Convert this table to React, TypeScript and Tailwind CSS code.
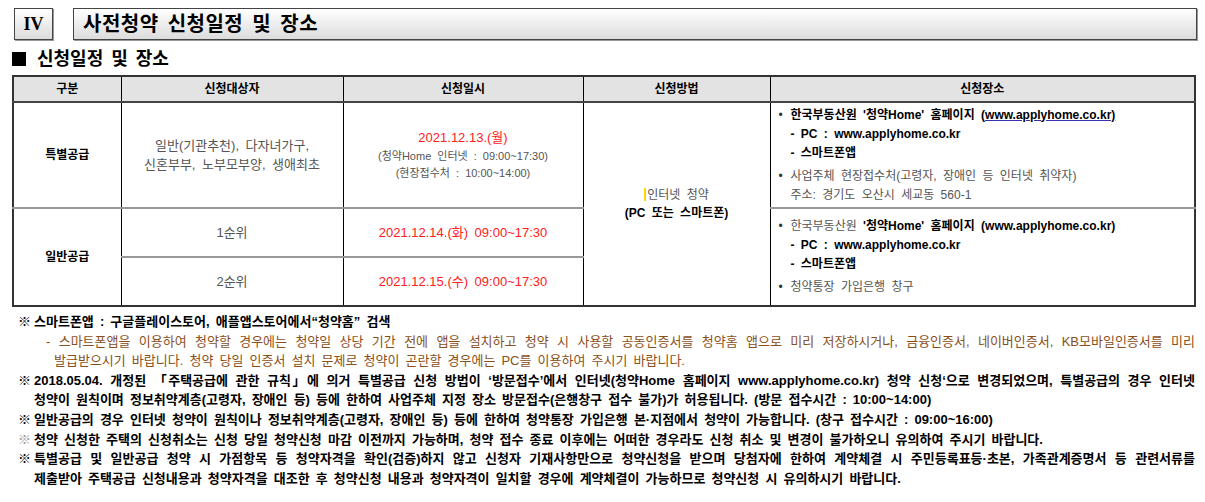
import React from 'react';

const KR = "font-['Liberation_Sans','Noto_Sans_CJK_KR',sans-serif]";

const notes: { lines: string[]; lightMark?: boolean }[] = [
  {
    lines: [
      '2018.05.04. 개정된 「주택공급에 관한 규칙」에 의거 특별공급 신청 방법이 ‘방문접수’에서 인터넷(청약Home 홈페이지 www.applyhome.co.kr) 청약 신청‘으로 변경되었으며, 특별공급의 경우 인터넷',
      '청약이 원칙이며 정보취약계층(고령자, 장애인 등) 등에 한하여 사업주체 지정 장소 방문접수(은행창구 접수 불가)가 허용됩니다. (방문 접수시간 : 10:00~14:00)',
    ],
  },
  {
    lines: [
      '일반공급의 경우 인터넷 청약이 원칙이나 정보취약계층(고령자, 장애인 등) 등에 한하여 청약통장 가입은행 본·지점에서 청약이 가능합니다. (창구 접수시간 : 09:00~16:00)',
    ],
  },
  {
    lightMark: true,
    lines: [
      '청약 신청한 주택의 신청취소는 신청 당일 청약신청 마감 이전까지 가능하며, 청약 접수 종료 이후에는 어떠한 경우라도 신청 취소 및 변경이 불가하오니 유의하여 주시기 바랍니다.',
    ],
  },
  {
    lines: [
      '특별공급 및 일반공급 청약 시 가점항목 등 청약자격을 확인(검증)하지 않고 신청자 기재사항만으로 청약신청을 받으며 당첨자에 한하여 계약체결 시 주민등록표등·초본, 가족관계증명서 등 관련서류를',
      '제출받아 주택공급 신청내용과 청약자격을 대조한 후 청약신청 내용과 청약자격이 일치할 경우에 계약체결이 가능하므로 청약신청 시 유의하시기 바랍니다.',
    ],
  },
];

function Place({ first }: { first: boolean }) {
  return (
    <div className="pl-[8px] text-[12px] leading-[19px]">
      <div className="flex">
        <span className="w-[12px] text-[#333]">•</span>
        <span>
          <span className={first ? 'font-bold text-black' : 'text-[#555]'}>한국부동산원 </span>
          <span className="font-bold text-black">'청약Home' 홈페이지 </span>
          <span className={'font-bold text-black ' + (first ? 'underline decoration-[#3a2fb0]' : '')}>(www.applyhome.co.kr)</span>
        </span>
      </div>
      <div className="pl-[12px] font-bold text-black">- PC : www.applyhome.co.kr</div>
      <div className="pl-[12px] font-bold text-black">- 스마트폰앱</div>
      {first ? (
        <div className="mt-[4px] flex text-[#555]">
          <span className="w-[12px] text-[#333]">•</span>
          <span>
            사업주체 현장접수처(고령자, 장애인 등 인터넷 취약자)
            <br />
            주소: 경기도 오산시 세교동 560-1
          </span>
        </div>
      ) : (
        <div className="mt-[4px] flex text-[#555]">
          <span className="w-[12px] text-[#333]">•</span>
          <span>청약통장 가입은행 창구</span>
        </div>
      )}
    </div>
  );
}

export default function App() {
  const th = 'border-x border-black border-b-2 border-b-[#444] bg-[#e3e3e3] font-bold text-[12px] text-black';
  const td = 'border border-black';
  return (
    <div className={`w-[1205px] h-[502px] bg-white ${KR} text-black [word-spacing:3px]`}>
      <div className="flex gap-[20px] pl-[14px] pr-[8px] pt-[8px]">
        <div className="w-[39px] h-[32px] border border-[#444] bg-gradient-to-b from-white to-[#dcdcdc] shadow-[1px_1px_0_#999] flex items-center justify-center font-['Liberation_Serif',serif] font-bold text-[18px]">
          IV
        </div>
        <div className="flex-1 h-[32px] border border-[#444] bg-gradient-to-b from-white to-[#dcdcdc] shadow-[1px_1px_0_#999] flex items-center pl-[9px] font-bold text-[20px] tracking-[0.5px]">
          사전청약 신청일정 및 장소
        </div>
      </div>

      <div className="flex items-center pl-[12px] mt-[7px] h-[24px] font-bold text-[18px]">
        <span className="w-[14px] h-[14px] bg-black mr-[11px]" />
        신청일정 및 장소
      </div>

      <table className="ml-[12px] mt-[4px] w-[1184px] table-fixed border-collapse border-2 border-[#333] text-center">
        <colgroup>
          <col className="w-[108px]" />
          <col className="w-[222px]" />
          <col className="w-[240px]" />
          <col className="w-[187px]" />
          <col />
        </colgroup>
        <thead>
          <tr className="h-[26px]">
            <th className={th}>구분</th>
            <th className={th}>신청대상자</th>
            <th className={th}>신청일시</th>
            <th className={th}>신청방법</th>
            <th className={th}>신청장소</th>
          </tr>
        </thead>
        <tbody>
          <tr className="h-[106px]">
            <td className={`${td} border-b-2 border-b-[#999] font-bold text-[12px]`}>특별공급</td>
            <td className={`${td} border-b-2 border-b-[#999] text-[13px] leading-[19px] text-[#555]`}>
              일반(기관추천), 다자녀가구,
              <br />
              신혼부부, 노부모부양, 생애최초
            </td>
            <td className={`${td} border-b-2 border-b-[#999] text-[#555]`}>
              <div className="text-[13px] leading-[20px] text-[#ff2020]">2021.12.13.(월)</div>
              <div className="text-[11px] leading-[17px]">(청약Home 인터넷 : 09:00~17:30)</div>
              <div className="text-[11px] leading-[17px]">(현장접수처 : 10:00~14:00)</div>
            </td>
            <td rowSpan={3} className={`${td} text-[12px] leading-[18px]`}>
              <div className="text-[#555]">
                <span className="inline-block w-[2px] h-[13px] bg-[#ffd800] align-[-2px] mr-[1px]" />
                인터넷 청약
              </div>
              <div className="font-bold">(PC 또는 스마트폰)</div>
            </td>
            <td className={`${td} border-b-2 border-b-[#999] text-left`}>
              <Place first />
            </td>
          </tr>
          <tr className="h-[49px]">
            <td rowSpan={2} className={`${td} font-bold text-[12px]`}>일반공급</td>
            <td className={`${td} border-b-2 border-b-[#999] text-[13px] text-[#555]`}>1순위</td>
            <td className={`${td} border-b-2 border-b-[#999] text-[13px] text-[#ff2020]`}>2021.12.14.(화) 09:00~17:30</td>
            <td rowSpan={2} className={`${td} text-left`}>
              <Place first={false} />
            </td>
          </tr>
          <tr className="h-[49px]">
            <td className={`${td} text-[13px] text-[#555]`}>2순위</td>
            <td className={`${td} text-[13px] text-[#ff2020]`}>2021.12.15.(수) 09:00~17:30</td>
          </tr>
        </tbody>
      </table>

      <div className="pl-[18px] pr-[10px] mt-[5px] text-[13px] leading-[19.6px] font-bold [word-spacing:2.5px]">
        <div className="flex whitespace-nowrap">
          <span className="w-[16px]">※</span>
          <span>스마트폰앱 : 구글플레이스토어, 애플앱스토어에서“청약홈” 검색</span>
        </div>
        <div className="pl-[28px] font-normal text-[#8a4f1a] whitespace-nowrap [text-align-last:justify]">
          - 스마트폰앱을 이용하여 청약할 경우에는 청약일 상당 기간 전에 앱을 설치하고 청약 시 사용할 공동인증서를 청약홈 앱으로 미리 저장하시거나, 금융인증서, 네이버인증서, KB모바일인증서를 미리
        </div>
        <div className="pl-[36px] font-normal text-[#8a4f1a] whitespace-nowrap">
          발급받으시기 바랍니다. 청약 당일 인증서 설치 문제로 청약이 곤란할 경우에는 PC를 이용하여 주시기 바랍니다.
        </div>
        {notes.map((n, i) => (
          <div key={i} className="flex">
            <span className={'w-[16px] shrink-0 ' + (n.lightMark ? 'text-[#999] font-normal' : '')}>※</span>
            <div className="flex-1">
              {n.lines.map((l, j) => (
                <div
                  key={j}
                  className={'whitespace-nowrap ' + (j < n.lines.length - 1 ? '[text-align-last:justify]' : '')}
                >
                  {l}
                </div>
              ))}
            </div>
          </div>
        ))}
      </div>
    </div>
  );
}
